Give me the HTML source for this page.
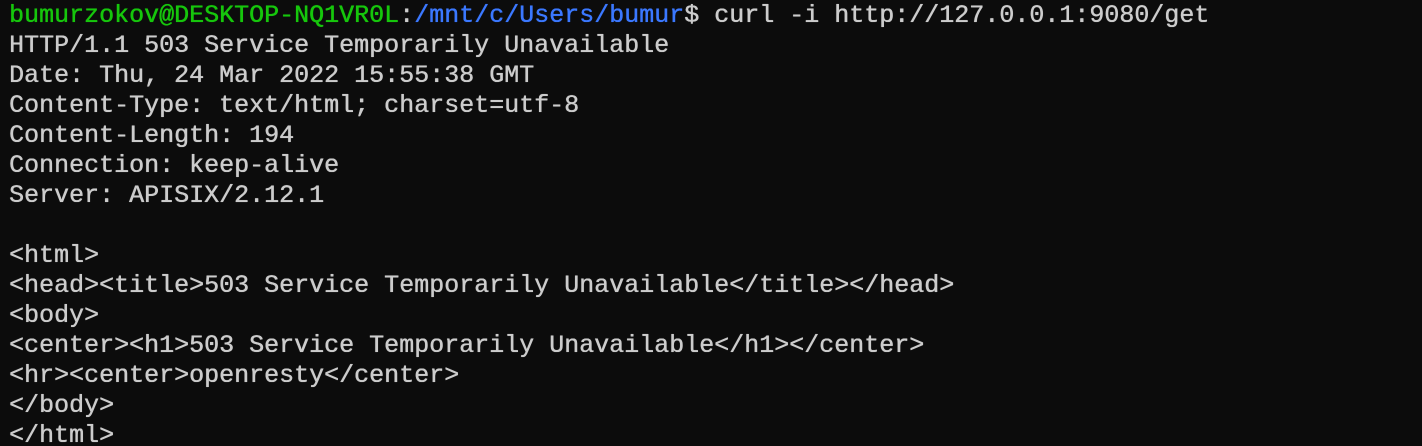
<!DOCTYPE html>
<html><head><meta charset="utf-8"><style>
html,body{margin:0;padding:0;background:#0c0c0c;width:1422px;height:446px;overflow:hidden}
pre{margin:0;padding:0 0 0 9px;font-family:"Liberation Mono",monospace;font-size:25px;line-height:30px;color:#cccccc;position:relative;top:1px;text-shadow:0 0 0.6px currentColor,0.3px 0 0 currentColor}
.g{color:#16c60c}.b{color:#3b78ff}
</style></head><body><pre><span class="g">bumurzokov@DESKTOP-NQ1VR0L</span>:<span class="b">/mnt/c/Users/bumur</span>$ curl -i http://127.0.0.1:9080/get
HTTP/1.1 503 Service Temporarily Unavailable
Date: Thu, 24 Mar 2022 15:55:38 GMT
Content-Type: text/html; charset=utf-8
Content-Length: 194
Connection: keep-alive
Server: APISIX/2.12.1

&lt;html&gt;
&lt;head&gt;&lt;title&gt;503 Service Temporarily Unavailable&lt;/title&gt;&lt;/head&gt;
&lt;body&gt;
&lt;center&gt;&lt;h1&gt;503 Service Temporarily Unavailable&lt;/h1&gt;&lt;/center&gt;
&lt;hr&gt;&lt;center&gt;openresty&lt;/center&gt;
&lt;/body&gt;
&lt;/html&gt;</pre></body></html>
